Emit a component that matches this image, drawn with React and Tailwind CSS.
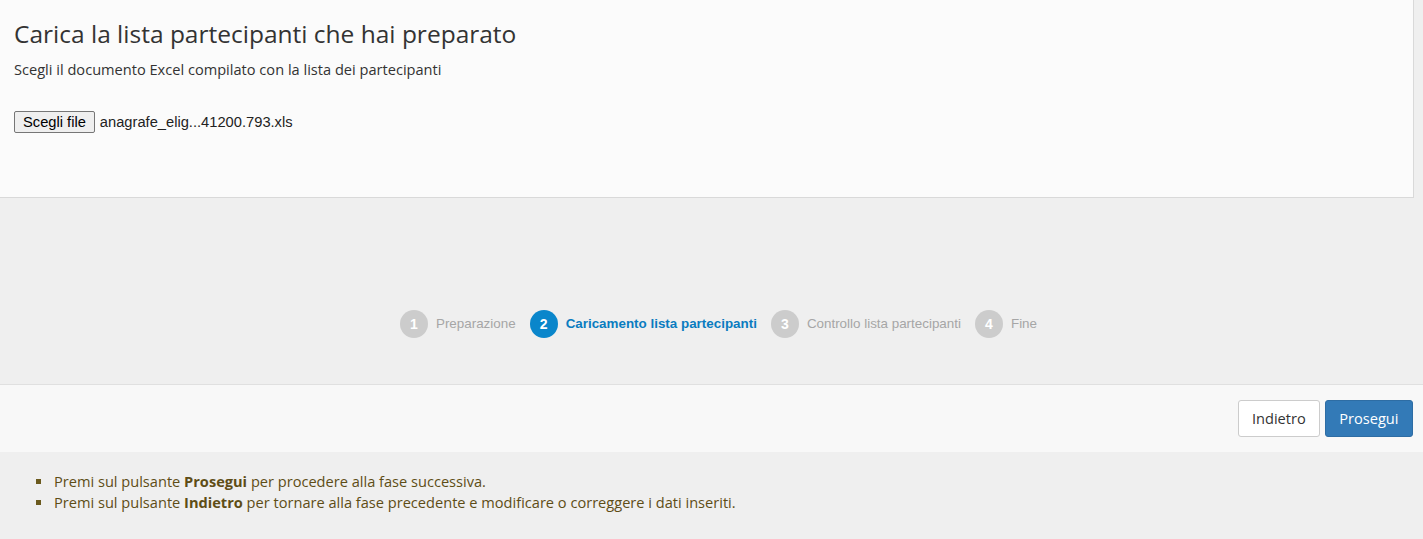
export default function App() {
  const steps = [
    { n: 1, label: "Preparazione" },
    { n: 2, label: "Caricamento lista partecipanti", active: true },
    { n: 3, label: "Controllo lista partecipanti" },
    { n: 4, label: "Fine" },
  ];

  return (
    <div className="min-h-[539px] bg-[#efefef] font-['Open_Sans',sans-serif]">
      <div className="mr-[9px] h-[198px] border-r border-b border-[#d9d9d9] bg-[#fbfbfb] px-[14px] pt-[17px]">
        <h1 className="text-[24.5px] leading-[34px] text-[#333]">Carica la lista partecipanti che hai preparato</h1>
        <p className="mt-[8px] text-[14.6px] leading-[20px] text-[#333]">
          Scegli il documento Excel compilato con la lista dei partecipanti
        </p>
        <div className="mt-[32px] flex items-center font-['Liberation_Sans',Arial,sans-serif] text-[14.7px] text-[#222]">
          <button className="h-[22px] rounded-[2px] border border-[#767676] bg-[#efefef] px-[8px] leading-[20px] text-black">
            Scegli file
          </button>
          <span className="ml-[5px]">anagrafe_elig...41200.793.xls</span>
        </div>
      </div>

      <div className="flex h-[186px] items-center justify-center pt-[66px] pl-[14px] font-['Liberation_Sans',Arial,sans-serif] text-[13.4px]">
        {steps.map((s) => (
          <div key={s.n} className="mx-[7px] flex items-center">
            <span
              className={
                s.active
                  ? "flex h-[28px] w-[28px] items-center justify-center rounded-full bg-[#0a86cb] text-[14px] font-bold text-white"
                  : "flex h-[28px] w-[28px] items-center justify-center rounded-full bg-[#cccccc] text-[14px] font-bold text-white"
              }
            >
              {s.n}
            </span>
            <span className={s.active ? "ml-[8px] font-bold text-[#0a7cc0]" : "ml-[8px] text-[#a6a6a6]"}>{s.label}</span>
          </div>
        ))}
      </div>

      <div className="flex h-[68px] items-center justify-end gap-[5px] border-t border-[#e0e0e0] bg-[#f8f8f8] pr-[10px]">
        <button className="h-[37px] rounded-[3px] border border-[#cccccc] bg-white px-[13px] text-[14.6px] text-[#333]">
          Indietro
        </button>
        <button className="h-[37px] rounded-[3px] border border-[#2e6da4] bg-[#337ab7] px-[13.5px] text-[14.6px] text-white">
          Prosegui
        </button>
      </div>

      <ul className="px-[36px] pt-[19px] pb-[24px] text-[14.6px] leading-[21px] text-[#5e4d16]">
        {[
          ["Prosegui", "per procedere alla fase successiva."],
          ["Indietro", "per tornare alla fase precedente e modificare o correggere i dati inseriti."],
        ].map(([b, rest]) => (
          <li key={b} className="flex items-center">
            <span className="mr-[13px] h-[5px] w-[5px] bg-[#6b5a1e]" />
            <span>
              Premi sul pulsante <b className="font-bold">{b}</b> {rest}
            </span>
          </li>
        ))}
      </ul>
    </div>
  );
}
